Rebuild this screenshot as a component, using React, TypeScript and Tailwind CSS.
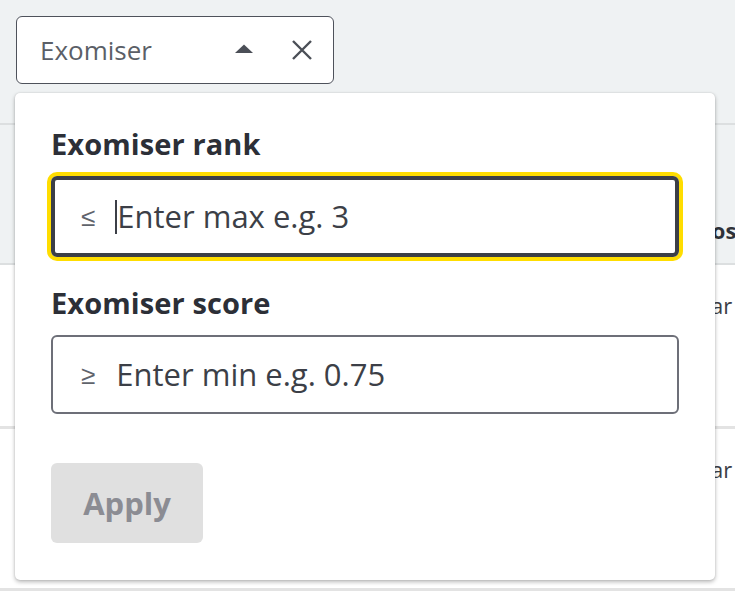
import React from "react";

export default function App() {
  return (
    <div
      className="relative w-[735px] h-[602px] overflow-hidden bg-white text-[#2f323a]"
      style={{ fontFamily: "'Open Sans', 'Noto Sans', sans-serif" }}
    >
      {/* page background: toolbar + table */}
      <div className="flex flex-col">
        <div className="h-[125px] bg-[#eff2f3] border-b-2 border-[#dcdfe0] pl-4 pt-4">
          <div className="w-[318px] h-[68px] rounded-[6px] border-[1.5px] border-[#4e525b] bg-white flex items-center pl-[23px] pr-[20px]">
            <span className="text-[26px] text-[#5b5f67]">Exomiser</span>
            <svg width="20" height="12" viewBox="0 0 20 12" className="ml-auto mb-[2px]">
              <path d="M1 10 L10 1.5 L19 10 Z" fill="#4b4f57" />
            </svg>
            <svg width="22" height="22" viewBox="0 0 22 22" className="ml-[37px]">
              <path d="M2 2 L20 20 M20 2 L2 20" stroke="#4b4f57" strokeWidth="2.4" />
            </svg>
          </div>
        </div>
        <div className="h-[140px] bg-[#eff2f3] border-b-2 border-[#dcdfe0] pt-[91px]">
          <span className="ml-[698px] block text-[22px] leading-[28px] font-bold whitespace-nowrap text-[#2f323a]">Pos</span>
        </div>
        <div className="h-[164px] border-b-[3px] border-[#e3e3e3] pt-[26px]">
          <span className="ml-[700px] block text-[22px] leading-[28px] whitespace-nowrap text-[#3b3e46]">var</span>
        </div>
        <div className="h-[162px] border-b-[3px] border-[#e3e3e3] pt-[26px]">
          <span className="ml-[700px] block text-[22px] leading-[28px] whitespace-nowrap text-[#3b3e46]">var</span>
        </div>
      </div>

      {/* dropdown panel */}
      <div className="absolute left-[15px] top-[93px] w-[700px] h-[487px] bg-white rounded-[5px] shadow-[0_2px_4px_rgba(0,0,0,0.28),0_0_2px_rgba(0,0,0,0.12)] pl-[36px] pr-[36px] pt-[35px]">
        <div className="text-[29px] font-bold leading-[32px] tracking-[0.1px] text-[#2c2f37]">Exomiser rank</div>
        <div className="mt-[16px] w-[628px] h-[81px] rounded-[6px] border-[4px] border-[#3c3f47] shadow-[0_0_0_4px_#ffdd00] flex items-center pl-[26px]">
          <span className="text-[26px] text-[#5f636b]" style={{ fontFamily: "'Noto Sans', sans-serif" }}>≤</span>
          <span className="ml-[20px] w-[2px] h-[34px] bg-[#3c3f47]"></span>
          <span className="text-[31px] text-[#3c3f47]">Enter max e.g. 3</span>
        </div>
        <div className="mt-[30px] text-[29px] font-bold leading-[32px] tracking-[0.1px] text-[#2c2f37]">Exomiser score</div>
        <div className="mt-[16px] w-[628px] h-[79px] rounded-[6px] border-[2px] border-[#6d6f78] flex items-center pl-[28px]">
          <span className="text-[26px] text-[#5f636b]" style={{ fontFamily: "'Noto Sans', sans-serif" }}>≥</span>
          <span className="ml-[21px] text-[31px] text-[#3c3f47]">Enter min e.g. 0.75</span>
        </div>
        <div className="mt-[49px] w-[152px] h-[80px] rounded-[6px] bg-[#e0e0e0] flex items-center justify-center">
          <span className="text-[31px] font-bold text-[#8b8c93]">Apply</span>
        </div>
      </div>
    </div>
  );
}
